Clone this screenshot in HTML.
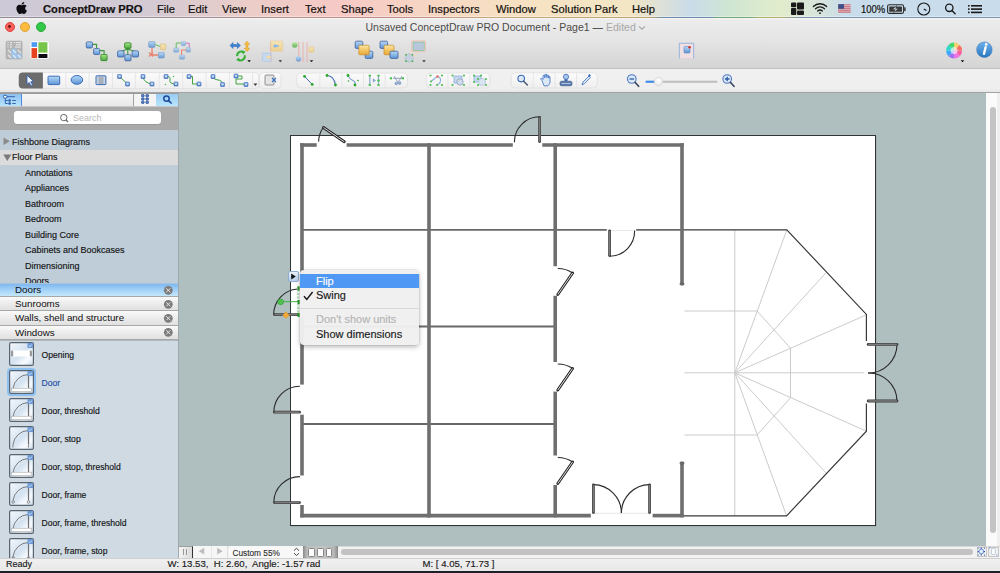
<!DOCTYPE html>
<html><head><meta charset="utf-8">
<style>
*{margin:0;padding:0;box-sizing:border-box}
html,body{width:1000px;height:573px;overflow:hidden;background:#ececec;font-family:"Liberation Sans",sans-serif;color:#222}
.a{position:absolute}
#menubar{left:0;top:0;width:1000px;height:18px;
 background:linear-gradient(90deg,#cdc9d6 0px,#d3cad3 150px,#eccdc8 250px,#f6c9c5 340px,#f7d6c4 430px,#f6e2c2 520px,#f2e6c4 630px,#cadcea 690px,#cfe6d2 730px,#e2eccc 780px,#d9e6d8 810px,#c9dcec 850px,#c9dcec 1000px)}
#menubar .line{left:0;top:16.7px;width:1000px;height:1px;
 background:linear-gradient(90deg,#8e8a96 0px,#a09098 200px,#b89088 300px,#c08c8a 400px,#c8a87c 500px,#c0a46e 650px,#6c8cb0 662px,#6c8cb0 712px,#72a876 716px,#72a876 750px,#b4b070 760px,#b4b070 780px,#7a94b0 800px,#7a94b0 1000px)}
.mt{top:3px;font-size:11.2px;line-height:13px;color:#141210;white-space:nowrap;-webkit-text-stroke:0.2px #141210}
#win{left:0;top:18px;width:1000px;height:555px}
#titlebar{left:0;top:17.7px;width:1000px;height:51.3px;background:linear-gradient(#f6f6f6,#ececec 2px,#e6e6e6 20px,#d4d4d4);border-bottom:1px solid #c0c0c0}
.tl{width:10px;height:10px;border-radius:50%;top:21.5px}
#tb2{left:0;top:69px;width:1000px;height:24.2px;background:linear-gradient(#f0f0f0,#efefef 85%,#e6e6e6);border-bottom:1px solid #a4a4a4}
#panel{left:0;top:93px;width:179px;height:465px;background:#cfdae3;border-right:1px solid #a0a8ae;overflow:hidden}
#canvas{left:179px;top:93px;width:808px;height:453px;background:#afbfbf}
#vscroll{left:987px;top:93px;width:13px;height:453px;background:#f3f3f3;border-left:1px solid #e0e0e0}
#hbar{left:179px;top:546px;width:821px;height:12px;background:#f0f0f0}
#status{left:0;top:557.7px;width:1000px;height:13.5px;background:linear-gradient(#f0f0f0,#e8e8e8);border-top:0.6px solid #d0d0d0}
#bottom{left:0;top:571px;width:1000px;height:2px;background:#1e2028}
.pt{font-size:9px;line-height:11px;color:#141414;white-space:nowrap;-webkit-text-stroke:0.15px #141414}
.tab{left:0;width:178px;height:14.4px;background:linear-gradient(#fafafa,#ececec 50%,#e0e0e0);border-bottom:1.2px solid #a8a8a8;overflow:hidden}
.tab span{position:absolute;left:15px;top:0.8px;font-size:9.8px;line-height:11px;color:#111;white-space:nowrap}
.cm{left:316px;font-size:11px;line-height:13px;color:#1a1a1a;white-space:nowrap;-webkit-text-stroke:0.15px #1a1a1a}
.pg{top:548.4px;width:6.6px;height:8.2px;border-radius:1.6px;background:#fdfdfd;border:1px solid #858585}
.st{font-size:9.6px;line-height:11px;color:#1a1a1a;white-space:nowrap;-webkit-text-stroke:0.15px #1a1a1a}
</style></head><body>
<div id="menubar" class="a">
 <div class="a" style="left:0;top:15.7px;width:1000px;height:1px;background:rgba(255,255,255,0.35)"></div><div class="a line"></div>
</div>
<div class="a mt" style="left:43px;font-weight:bold">ConceptDraw PRO</div>
<div class="a mt" style="left:157px">File</div>
<div class="a mt" style="left:188px">Edit</div>
<div class="a mt" style="left:222px">View</div>
<div class="a mt" style="left:261px">Insert</div>
<div class="a mt" style="left:305px">Text</div>
<div class="a mt" style="left:341px">Shape</div>
<div class="a mt" style="left:387px">Tools</div>
<div class="a mt" style="left:428px">Inspectors</div>
<div class="a mt" style="left:496px">Window</div>
<div class="a mt" style="left:551px">Solution Park</div>
<div class="a mt" style="left:632px">Help</div>
<svg class="a" style="left:0;top:0" width="1000" height="18" viewBox="0 0 1000 18">
<!-- apple -->
<path transform="translate(15.17 1.9) scale(0.54 0.5)" fill="#0e0e12" d="M12.152 6.896c-.948 0-2.415-1.078-3.96-1.04-2.04.027-3.91 1.183-4.961 3.014-2.117 3.675-.546 9.103 1.519 12.09 1.013 1.454 2.208 3.09 3.792 3.039 1.52-.065 2.09-.987 3.935-.987 1.831 0 2.35.987 3.96.948 1.637-.026 2.676-1.48 3.676-2.948 1.156-1.688 1.636-3.325 1.662-3.415-.039-.013-3.182-1.221-3.22-4.857-.026-3.04 2.48-4.494 2.597-4.559-1.429-2.09-3.623-2.324-4.39-2.376-2-.156-3.675 1.09-4.61 1.09zM15.53 3.83c.843-1.012 1.4-2.427 1.245-3.83-1.207.052-2.662.805-3.532 1.818-.78.896-1.454 2.338-1.273 3.714 1.338.104 2.715-.688 3.559-1.701"/>
<!-- grid -->
<g fill="#1a1a1a"><rect x="791" y="2.6" width="5.3" height="4.6" rx="1"/><rect x="791" y="8" width="5.3" height="7" rx="1"/><rect x="797" y="2.6" width="7" height="7" rx="1"/><rect x="797" y="10.4" width="7" height="4.6" rx="1"/></g>
<!-- wifi -->
<g fill="none" stroke="#1a1a1a" stroke-width="1.3" stroke-linecap="round"><path d="M813.3 6.5A9.5 9.5 0 0 1 826.7 6.5"/><path d="M815.5 8.8A6.4 6.4 0 0 1 824.5 8.8"/><path d="M817.7 11A3.2 3.2 0 0 1 822.3 11"/></g>
<circle cx="820" cy="13.2" r="0.9" fill="#1a1a1a"/>
<!-- flag -->
<rect x="838.2" y="4.2" width="12.4" height="8.8" fill="#c87a86"/>
<g stroke="#e8c8cc" stroke-width="0.7"><path d="M838.2 5.5h12.4M838.2 7.6h12.4M838.2 9.7h12.4M838.2 11.8h12.4"/></g>
<rect x="838.2" y="4.2" width="5.8" height="4.6" fill="#3a5088"/>
<!-- battery -->
<rect x="887.6" y="4.8" width="16" height="8.6" rx="1.6" fill="none" stroke="#2a2a2a" stroke-width="1.1"/>
<rect x="904.2" y="7.3" width="1.4" height="3.6" rx="0.5" fill="#2a2a2a"/>
<rect x="889.2" y="6.4" width="12.8" height="5.4" rx="0.6" fill="#3a3a3a"/>
<path d="M896.8 5.5L892.6 9.6h2.6L893.8 12.8 898.2 8.4h-2.6z" fill="#e8eef4" stroke="#2a2a2a" stroke-width="0.5"/>
<!-- clock -->
<circle cx="923.8" cy="9" r="6" fill="none" stroke="#1a1a1a" stroke-width="1.1"/>
<path d="M923.8 9l2.6 1.5" stroke="#1a1a1a" stroke-width="1.4"/>
<!-- search -->
<circle cx="949.3" cy="7.8" r="3.7" fill="none" stroke="#1a1a1a" stroke-width="1.3"/>
<path d="M951.9 10.5l3.2 3.2" stroke="#1a1a1a" stroke-width="1.4" stroke-linecap="round"/>
<!-- list -->
<g fill="#1a1a1a"><rect x="968" y="5" width="1.6" height="1.6"/><rect x="968" y="8.3" width="1.6" height="1.6"/><rect x="968" y="11.6" width="1.6" height="1.6"/><rect x="971" y="5" width="11" height="1.6"/><rect x="971" y="8.3" width="11" height="1.6"/><rect x="971" y="11.6" width="11" height="1.6"/></g>
</svg>
<div class="a mt" style="left:861px;font-size:11px;transform:scaleX(0.86);transform-origin:0 0">100%</div>


<div id="titlebar" class="a"></div>
<div id="tb2" class="a"></div>
<!-- traffic lights -->
<div class="a tl" style="left:4.75px;background:#fc605c;border:0.5px solid #e0443e"></div>
<div class="a" style="left:8.4px;top:25.1px;width:2.8px;height:2.8px;border-radius:50%;background:#6a1a14"></div>
<div class="a tl" style="left:20.2px;background:#fdbc40;border:0.5px solid #dea034"></div>
<div class="a tl" style="left:36px;background:#34c84a;border:0.5px solid #27aa35"></div>
<div class="a" style="left:365.5px;top:21px;font-size:10.5px;line-height:13px;color:#4a4a4a;white-space:nowrap">Unsaved ConceptDraw PRO Document - Page1 <span style="color:#333">&mdash;</span> <span style="color:#a8a8a8">Edited</span></div>
<svg class="a" style="left:638px;top:25px" width="8" height="6"><path d="M1 1.5 L4 4.2 L7 1.5" stroke="#a8a8a8" stroke-width="1.1" fill="none"/></svg>


<svg class="a" style="left:0;top:0" width="1000" height="93" viewBox="0 0 1000 93">
<defs>
 <linearGradient id="gb" x1="0" y1="0" x2="0" y2="1"><stop offset="0" stop-color="#b8daf8"/><stop offset="1" stop-color="#5c94d4"/></linearGradient>
 <linearGradient id="gg" x1="0" y1="0" x2="0" y2="1"><stop offset="0" stop-color="#a8e88a"/><stop offset="1" stop-color="#48a83c"/></linearGradient>
 <linearGradient id="gy" x1="0" y1="0" x2="0" y2="1"><stop offset="0" stop-color="#fce6a0"/><stop offset="1" stop-color="#e8a830"/></linearGradient>
 <linearGradient id="gyl" x1="0" y1="0" x2="0" y2="1"><stop offset="0" stop-color="#f6e4b4"/><stop offset="1" stop-color="#ecd090"/></linearGradient>
 <linearGradient id="gcb" x1="0" y1="0" x2="0" y2="1"><stop offset="0" stop-color="#9cc4f0"/><stop offset="1" stop-color="#4a80cc"/></linearGradient>
 <linearGradient id="gbtn" x1="0" y1="0" x2="0" y2="1"><stop offset="0" stop-color="#fbfbfb"/><stop offset="1" stop-color="#efefef"/></linearGradient>
 <radialGradient id="gsl" cx="0.5" cy="0.4" r="0.6"><stop offset="0" stop-color="#ffffff"/><stop offset="1" stop-color="#e6e6e6"/></radialGradient>
 <linearGradient id="ginfo" x1="0" y1="0" x2="0" y2="1"><stop offset="0" stop-color="#6cb0ec"/><stop offset="1" stop-color="#2a78c0"/></linearGradient>
</defs>
<!-- icon1 table -->
<rect x="6.2" y="41.2" width="15.8" height="17.7" rx="1.2" fill="#b6b6b6" stroke="#a0a0a0" stroke-width="0.6"/>
<g stroke="#f4f4f4" stroke-width="0.9"><path d="M7.5 42.6h1M10 42.6h2M14 42.6h1M16 42.6h5M7.5 44.8h1M10 44.8h2M16 44.8h5M7.5 47h1M10 47h2M15 47h6"/></g>
<rect x="11.5" y="48.8" width="5" height="9.6" fill="#9cc4ec"/><rect x="16.5" y="53.6" width="5" height="4.8" fill="#9cc4ec"/>
<g stroke="#f0f0f0" stroke-width="1.1" opacity="0.85"><path d="M8 50l3 3M13 50l3 3M18 50l3 3M8 55l3 3M13 55l3 3M18 55l3 3"/></g>
<!-- icon2 blocks -->
<rect x="30.4" y="41.2" width="18.5" height="17.5" rx="2" fill="#fff"/>
<rect x="31.5" y="42.2" width="5.6" height="4.7" fill="#4a9af2"/>
<rect x="38.4" y="42.2" width="9" height="10.4" fill="#76c44a"/>
<rect x="31.5" y="48.1" width="5.6" height="10" fill="#e6441e"/>
<rect x="38.4" y="54" width="9" height="4.1" rx="0.6" fill="#0c0c12"/>
<!-- icon3 tree -->
<g stroke="#3a9a3a" stroke-width="1.1" fill="none"><path d="M92.4 44.4h4.2v4.2M99.7 50.6h4.4v4"/></g>
<rect x="86.3" y="41.9" width="6.1" height="6.1" rx="1" fill="url(#gb)" stroke="#3c5e9c" stroke-width="0.8"/>
<rect x="93.6" y="48.6" width="6.1" height="5.9" rx="1" fill="url(#gb)" stroke="#3c5e9c" stroke-width="0.8"/>
<rect x="100.8" y="54.4" width="6.3" height="6.3" rx="1" fill="url(#gg)" stroke="#2e8026" stroke-width="0.8"/>
<!-- icon4 org -->
<g stroke="#3a9a3a" stroke-width="1.1" fill="none"><path d="M127.8 48.3v6.4M127.8 49L121 51.5M127.8 49l7 2.5"/></g>
<rect x="124.6" y="42.8" width="6.4" height="5.6" rx="1" fill="url(#gg)" stroke="#2e8026" stroke-width="0.8"/>
<rect x="117.6" y="50.9" width="6.4" height="6.1" rx="1" fill="url(#gb)" stroke="#3c5e9c" stroke-width="0.8"/>
<rect x="124.8" y="54.7" width="6.2" height="6.1" rx="1" fill="url(#gb)" stroke="#3c5e9c" stroke-width="0.8"/>
<rect x="132.1" y="50.9" width="6.4" height="6.1" rx="1" fill="url(#gb)" stroke="#3c5e9c" stroke-width="0.8"/>
<!-- icon5 -->
<g stroke="#e88070" stroke-width="1.3" fill="none"><path d="M152 47.4v7.6M149 52.5l4 4M153 52.5l-4 4M152 55h6.5"/></g>
<path d="M155 44.5l5.4 2" stroke="#60c060" stroke-width="1"/>
<rect x="148.7" y="41.4" width="6.2" height="6" rx="1" fill="url(#gb)" stroke="#6a8cc0" stroke-width="0.6" opacity="0.9"/>
<rect x="160.4" y="44" width="5.4" height="5.7" rx="1" fill="url(#gyl)" stroke="#d8b870" stroke-width="0.6"/>
<rect x="158.3" y="52.3" width="6" height="5.7" rx="1" fill="url(#gb)" stroke="#6a8cc0" stroke-width="0.6" opacity="0.9"/>
<!-- icon6 -->
<g fill="none" stroke-width="1"><path d="M176.2 48v-5h5" stroke="#60c060"/><path d="M185.6 43.2h3.6v4.2" stroke="#d070c0"/><path d="M186.1 50h-4.6v4.8" stroke="#e88060"/></g>
<g fill="url(#gb)" stroke="#7a9cc8" stroke-width="0.5" opacity="0.75">
<rect x="173.6" y="48.1" width="5.2" height="4.2" rx="0.8"/><rect x="181.4" y="41.4" width="4.2" height="4.4" rx="0.8"/><rect x="186.1" y="47.4" width="4.4" height="4.9" rx="0.8"/><rect x="179.4" y="54.9" width="5.2" height="4.4" rx="0.8"/></g>
<!-- icon7 arrows -->
<path d="M230 45.5l3-3v2h4.4v-2l3 3-3 3v-2h-4.4v2z" fill="#3c84d8" stroke="#2a64b0" stroke-width="0.5"/>
<path d="M247 41.3l2.6 3h-1.6v4.2h1.6l-2.6 3-2.6-3h1.6v-4.2h-1.6z" fill="#f4c040" stroke="#d89020" stroke-width="0.5"/>
<g fill="none" stroke="#34b034" stroke-width="2"><path d="M237.2 56.2A4 4 0 0 1 243.6 52.4"/><path d="M244.6 55.2A4 4 0 0 1 238.2 59.4"/></g><path d="M242 50.2l3.6 1.6-2.6 2.6z" fill="#34b034"/><path d="M239.8 61.6l-3.6-1.6 2.6-2.6z" fill="#34b034"/><rect x="239.2" y="54.2" width="3.4" height="2.6" fill="#c8e8c8" opacity="0.8"/>
<path d="M247.3 60.3h3.6l-1.8 2z" fill="#111"/>
<!-- icon8 -->
<rect x="270.4" y="41" width="12.3" height="10.2" rx="0.8" fill="url(#gyl)" stroke="#e0c890" stroke-width="0.5"/>
<rect x="262.3" y="53" width="9.3" height="8.4" rx="0.8" fill="#c4d8ee" stroke="#a8c0dc" stroke-width="0.5"/>
<path d="M273 46l2.5-2.5v1.6h3v1.8h-3v1.6z" fill="#8cb8e8"/>
<path d="M266 57.2l2.8-2.5v1.6h2.6v1.8h-2.6v1.6z" fill="#f4dca0"/>
<path d="M270.6 41v20.5" stroke="#e8a4a4" stroke-width="0.8" stroke-dasharray="1 0.8"/>
<path d="M278.5 60.3h3.6l-1.8 2z" fill="#333"/>
<!-- icon9 -->
<g stroke="#eab0b0" stroke-width="1"><path d="M298.8 42v20M303 42v20M307 42v20"/></g>
<circle cx="294.8" cy="45" r="2.8" fill="url(#gg)" opacity="0.8"/>
<circle cx="298.5" cy="58.8" r="2.8" fill="url(#gb)" opacity="0.85"/>
<rect x="308.8" y="47" width="5" height="5.3" rx="1" fill="url(#gyl)" stroke="#e0c080" stroke-width="0.5"/>
<path d="M309.7 60.3h3.6l-1.8 2z" fill="#222"/>
<!-- icon10 -->
<rect x="355.2" y="41.2" width="7.6" height="7.2" rx="1.2" fill="url(#gb)" stroke="#3c5e9c" stroke-width="0.8"/>
<rect x="365.2" y="51.2" width="7.6" height="7.2" rx="1.2" fill="url(#gb)" stroke="#3c5e9c" stroke-width="0.8"/>
<rect x="358.8" y="45.2" width="10.4" height="9.6" rx="1.2" fill="url(#gy)" stroke="#c08020" stroke-width="0.6"/>
<!-- icon11 -->
<rect x="380" y="41.2" width="7.6" height="7.2" rx="1.2" fill="url(#gb)" stroke="#3c5e9c" stroke-width="0.8"/>
<rect x="384" y="45.2" width="10" height="9.6" rx="1.2" fill="url(#gy)" stroke="#c08020" stroke-width="0.6"/>
<rect x="390" y="51.2" width="8" height="7.2" rx="1.2" fill="url(#gb)" stroke="#3c5e9c" stroke-width="0.8"/>
<!-- icon12 -->
<path d="M408 56L414 50M411 59L418 52" stroke="#f4d8c8" stroke-width="1.5"/>
<rect x="411.6" y="40.8" width="14" height="10.8" rx="1" fill="#f2dede" stroke="#e8b0b0" stroke-width="0.6"/>
<rect x="413" y="42" width="11.2" height="8.4" fill="#b8c8dc" stroke="#70c070" stroke-width="0.6"/>
<circle cx="409.2" cy="58" r="4.2" fill="#c4d0de" stroke="#a8b8c8" stroke-width="0.5"/>
<g fill="#40b040"><circle cx="406" cy="54.8" r="0.9"/><circle cx="412.4" cy="54.8" r="0.9"/><circle cx="406" cy="61.2" r="0.9"/><circle cx="412.4" cy="61.2" r="0.9"/></g>
<path d="M422.2 60.3h3.6l-1.8 2z" fill="#333"/>
<!-- icon 686 -->
<rect x="679" y="43" width="15" height="15.5" fill="#f0e0e4" stroke="#e8c0c8" stroke-width="0.6" stroke-dasharray="1 1"/>
<path d="M679.4 58.5V43.3h14.2V58.5" stroke="#90b4e0" stroke-width="0.9" fill="none"/>
<rect x="684" y="46.5" width="6" height="6.5" rx="1" fill="url(#gb)" stroke="#4a74b0" stroke-width="0.5"/>
<circle cx="689.6" cy="47.2" r="1.2" fill="#d83020"/>
<!-- color wheel -->
<g transform="translate(954.1 50.6)">
<path d="M0 0L0 -8A8 8 0 0 1 5.66 -5.66z" fill="#f8d070"/>
<path d="M0 0L5.66 -5.66A8 8 0 0 1 8 0z" fill="#f87060"/>
<path d="M0 0L8 0A8 8 0 0 1 5.66 5.66z" fill="#f860a0"/>
<path d="M0 0L5.66 5.66A8 8 0 0 1 0 8z" fill="#f070e8"/>
<path d="M0 0L0 8A8 8 0 0 1 -5.66 5.66z" fill="#a070f0"/>
<path d="M0 0L-5.66 5.66A8 8 0 0 1 -8 0z" fill="#40a8f8"/>
<path d="M0 0L-8 0A8 8 0 0 1 -5.66 -5.66z" fill="#30d8d0"/>
<path d="M0 0L-5.66 -5.66A8 8 0 0 1 0 -8z" fill="#40d870"/>
<circle r="3.5" fill="#fff" opacity="0.6"/>
</g>
<path d="M960.7 60.3h3.6l-1.8 2z" fill="#111"/>
<!-- info -->
<circle cx="984.4" cy="49.7" r="7.8" fill="url(#ginfo)" stroke="#2a6aa8" stroke-width="0.4"/>
<path d="M985.6 47.2l-1.6 6.6" stroke="#fff" stroke-width="2.4" stroke-linecap="round"/>
<circle cx="986.2" cy="44.4" r="1.35" fill="#fff"/>

<!-- ===== second row ===== -->
<g stroke="#d8d8d8" stroke-width="0.6" fill="url(#gbtn)">
<rect x="18.8" y="72.6" width="240" height="16" rx="4"/>
<rect x="259.6" y="72.6" width="21.4" height="16" rx="4"/>
<rect x="296.8" y="73.1" width="110.8" height="14.8" rx="4"/>
<rect x="426.2" y="73.1" width="63.7" height="14.8" rx="4"/>
<rect x="511.2" y="72.8" width="86" height="15.2" rx="4"/>
</g>
<path d="M22.8 72.6H42.9V88.6H22.8A4 4 0 0 1 18.8 84.6V76.6A4 4 0 0 1 22.8 72.6z" fill="#6c6c6c"/>
<g stroke="#e2e2e2" stroke-width="0.8"><path d="M65.9 73v15.4M89.1 73v15.4M112.5 73v15.4M135.4 73v15.4M159.2 73v15.4M182.7 73v15.4M206 73v15.4M229.5 73v15.4M252.5 73v15.4M319.9 73.5v14M341.9 73.5v14M363.5 73.5v14M385.2 73.5v14M447.9 73.5v14M469.9 73.5v14M533.3 73.2v14.5M555 73.2v14.5M576.5 73.2v14.5"/></g>
<!-- cursor -->
<path d="M27 75.3L27 84.3L29.2 82.4L31 86L32.6 85.2L30.8 81.7L33.6 81.4z" fill="#f4f8ff" stroke="#2c5cb0" stroke-width="0.8"/>
<rect x="48" y="76.2" width="11.7" height="8.4" rx="0.8" fill="url(#gb)" stroke="#2e62b4" stroke-width="0.9"/>
<ellipse cx="76.9" cy="79.9" rx="5.8" ry="4.4" fill="url(#gb)" stroke="#2e62b4" stroke-width="0.9"/>
<rect x="96" y="75.8" width="9.9" height="8.8" rx="0.6" fill="#c8d4e0" stroke="#3a6ab8" stroke-width="1"/>
<rect x="98.5" y="76.5" width="5" height="7.4" fill="#a4b0bc"/>
<!-- connectors -->
<g stroke="#2c9a2c" stroke-width="0.9" fill="none">
<path d="M119.5 76.5L127.5 84"/>
<path d="M143 76.5Q144 83 152 84"/>
<path d="M166 76.5Q171 76 170 80Q169 84 176 84"/>
<path d="M189 76.5H192.5V84H199"/>
<path d="M213 76.5Q214 80 218 80Q222 80 222.5 84.5"/>
<path d="M236 76H242V79H236V84H245.5"/>
</g>
<g fill="url(#gcb)" stroke="#3a64b0" stroke-width="0.6">
<rect x="117.5" y="74.5" width="4" height="4" rx="0.6"/><rect x="125.5" y="82" width="4" height="4" rx="0.6"/>
<rect x="141" y="74.5" width="4" height="4" rx="0.6"/><rect x="150" y="82" width="4" height="4" rx="0.6"/>
<rect x="164" y="74.5" width="4" height="4" rx="0.6"/><rect x="174" y="82" width="4" height="4" rx="0.6"/>
<rect x="187" y="74.5" width="4" height="4" rx="0.6"/><rect x="197" y="82" width="4" height="4" rx="0.6"/>
<rect x="211" y="74.5" width="4" height="4" rx="0.6"/><rect x="220.5" y="82.5" width="4" height="4" rx="0.6"/>
<rect x="234" y="74" width="4" height="4" rx="0.6"/><rect x="244" y="82.5" width="4" height="4" rx="0.6"/>
</g><g fill="#eaf2fc" opacity="0.85"><rect x="118.6" y="75.7" width="1.8" height="1.6"/><rect x="126.6" y="83.2" width="1.8" height="1.6"/><rect x="142.1" y="75.7" width="1.8" height="1.6"/><rect x="151.1" y="83.2" width="1.8" height="1.6"/><rect x="165.1" y="75.7" width="1.8" height="1.6"/><rect x="175.1" y="83.2" width="1.8" height="1.6"/><rect x="188.1" y="75.7" width="1.8" height="1.6"/><rect x="198.1" y="83.2" width="1.8" height="1.6"/><rect x="212.1" y="75.7" width="1.8" height="1.6"/><rect x="221.6" y="83.7" width="1.8" height="1.6"/><rect x="235.1" y="75.2" width="1.8" height="1.6"/><rect x="245.1" y="83.7" width="1.8" height="1.6"/></g>
<g fill="#50c050"><circle cx="173.5" cy="76.5" r="0.8"/><circle cx="165.5" cy="84.5" r="0.8"/></g>
<path d="M253.5 83.5h3.8l-1.9 2.4z" fill="#333"/>
<rect x="265" y="75" width="9" height="10" rx="1" fill="#e4e4e4" stroke="#7a7a7a" stroke-width="0.8"/>
<path d="M272 78l4 4M276 78l-4 4" stroke="#3a70c8" stroke-width="1.1"/>
<!-- group2 -->
<path d="M304.5 76.3L312.2 84.4" stroke="#4a70b8" stroke-width="1"/>
<path d="M327 75.5Q334 76 335.5 85" stroke="#4a70b8" stroke-width="1.2" fill="none"/>
<path d="M348 75.5Q350 80 353 80.5Q356 81 355 85" stroke="#6a8cc8" stroke-width="1" fill="none"/>
<g fill="#28a828"><circle cx="304.5" cy="76.3" r="1.4"/><circle cx="312.2" cy="84.4" r="1.4"/><circle cx="327" cy="75.5" r="1.4"/><circle cx="335.5" cy="85" r="1.4"/><circle cx="348" cy="75.5" r="1.4"/><circle cx="355" cy="85" r="1.4"/><circle cx="348.5" cy="81" r="0.8"/><circle cx="358" cy="80.5" r="0.8"/></g>
<path d="M369.8 75.5v9.5M378.5 75.5v9.5" stroke="#8aa8d0" stroke-width="1.2"/>
<path d="M372.8 78.2l3.2 2.2-3.2 2.2z" fill="#8aa8d0"/>
<g fill="#40c040"><rect x="368.6" y="74.8" width="2.4" height="1.6"/><rect x="368.6" y="84.2" width="2.4" height="1.6"/><rect x="377.3" y="74.8" width="2.4" height="1.6"/><rect x="377.3" y="79.6" width="2.4" height="1.8"/><rect x="377.3" y="84.2" width="2.4" height="1.6"/></g>
<path d="M393 78.3h10M394 76l5.5 9M402 76l-5.5 9" stroke="#8a9ab8" stroke-width="0.9"/>
<g fill="#40c040"><rect x="389.8" y="77.3" width="2.2" height="2"/><rect x="401.8" y="77.3" width="2.2" height="2"/></g>
<ellipse cx="396" cy="83.5" rx="1.4" ry="1.8" fill="#8aa8d0"/><ellipse cx="400" cy="83" rx="1.4" ry="1.8" fill="#8aa8d0"/>
<!-- group3 -->
<path d="M431 81.5L437 76.5Q441 77 440.5 81Q440 84 437 85" stroke="#8ab0dc" stroke-width="1.1" fill="none"/>
<rect x="454" y="76" width="8" height="7" fill="#c8d8ec" stroke="#8ab0dc" stroke-width="0.8"/>
<circle cx="460" cy="82" r="3.2" fill="#d0dcec" stroke="#8aa0bc" stroke-width="0.8"/>
<rect x="474" y="76" width="7" height="6" fill="#c8d8ec" stroke="#8ab0dc" stroke-width="0.8"/>
<circle cx="482" cy="82" r="3.6" fill="#d8e4f0" stroke="#a0b8d4" stroke-width="0.6"/>
<g fill="#50c050">
<circle cx="430.5" cy="75.5" r="1.1"/><circle cx="442" cy="75.5" r="1.1"/><circle cx="430.5" cy="85" r="1.1"/><circle cx="442" cy="85" r="1.1"/><circle cx="431" cy="81.5" r="1"/><circle cx="437" cy="85" r="1"/>
<circle cx="452.5" cy="75.5" r="1.1"/><circle cx="464" cy="75.5" r="1.1"/><circle cx="452.5" cy="85" r="1.1"/><circle cx="464" cy="85" r="1.1"/>
<circle cx="474" cy="75.5" r="1.1"/><circle cx="481" cy="75.5" r="1.1"/><circle cx="474" cy="82" r="1.1"/><circle cx="478" cy="79" r="1.1"/><circle cx="486" cy="79" r="1.1"/><circle cx="478" cy="85" r="1.1"/><circle cx="486" cy="85" r="1.1"/>
</g>
<circle cx="437.5" cy="76.5" r="1.3" fill="#e07060"/>
<!-- group4 -->
<circle cx="521.2" cy="78.6" r="3.3" fill="#dce8f8" stroke="#3a6ab8" stroke-width="1.1"/>
<path d="M523.6 81.2l3.8 3.8" stroke="#4a5a70" stroke-width="1.5" stroke-linecap="round"/>
<path d="M542 80.5l-1.5-1.5 1-1 1.5 1.5V75.5l1.4-0.5 0.6 3V74.5l1.4-0.3 0.6 3.5V75l1.4 0.2 0.4 3V76.5l1.2 0.3V83l-2 2.8h-4z" fill="#dce8f8" stroke="#3a70c0" stroke-width="0.8"/>
<circle cx="566" cy="76.8" r="2.6" fill="#a8c8ec" stroke="#3a6ab8" stroke-width="0.8"/>
<path d="M564.5 79.2h3v2h-3z" fill="#3a6ab8"/>
<rect x="560" y="81.2" width="12" height="4.6" rx="1.6" fill="#5a7cb0" stroke="#34507a" stroke-width="0.6"/>
<path d="M561.5 83.5h9" stroke="#c8d4e4" stroke-width="0.8"/>
<path d="M582 85l1-3 6-6 1.5 1.5-6 6z" fill="#dce8f8" stroke="#3a6ab8" stroke-width="0.8"/>
<path d="M588 75.5l1.5-1.5 1.5 1.5-1.5 1.5z" fill="#3a6ab8"/>
<!-- zoom -->
<circle cx="631.8" cy="79" r="4.3" fill="#dce8f8" stroke="#4a78c0" stroke-width="1.1"/>
<path d="M629.5 79h4.6" stroke="#2a5aa8" stroke-width="1.3"/>
<path d="M635 82.3l3.6 4" stroke="#3a4a60" stroke-width="1.7" stroke-linecap="round"/>
<path d="M646.5 81.7H716.5" stroke="#bdbdbd" stroke-width="2" stroke-linecap="round"/>
<path d="M646.5 81.7H656" stroke="#3a8cf0" stroke-width="2" stroke-linecap="round"/>
<circle cx="658.5" cy="81.5" r="4.3" fill="url(#gsl)" stroke="#c8c8c8" stroke-width="0.5"/>
<circle cx="727.2" cy="79" r="4.3" fill="#dce8f8" stroke="#4a78c0" stroke-width="1.1"/>
<path d="M724.9 79h4.6M727.2 76.7v4.6" stroke="#2a5aa8" stroke-width="1.3"/>
<path d="M730.4 82.3l3.6 4" stroke="#3a4a60" stroke-width="1.7" stroke-linecap="round"/>
</svg>

<div id="panel" class="a">
 <div class="a" style="left:0;top:0;width:178px;height:13px;background:linear-gradient(#f6f6f6,#e8e8e8);border-top:0.5px solid #9a9a9a"></div>
 <div class="a" style="left:0;top:0.5px;width:21.5px;height:12.5px;background:linear-gradient(#8cc0f0,#b8e4fc);border-right:1px solid #4a8ad8"></div>
 <div class="a" style="left:133px;top:0.5px;width:23px;height:12.5px;background:#f4f4f4;border-left:1px solid #a0a0a0"></div>
 <div class="a" style="left:156px;top:0.5px;width:22px;height:12.5px;background:linear-gradient(#98ccf4,#b8e4fc)"></div>
 <svg class="a" style="left:0;top:0" width="178" height="13" viewBox="0 93 178 13">
  <ellipse cx="5.2" cy="96.7" rx="1.8" ry="1.5" fill="#fff" stroke="#2a5aa8" stroke-width="1"/>
  <path d="M7 96.7h8M5.3 98.3v5.2h2.5M5.3 100.5h2.5M12.3 100.5h3.5M12.3 103.5h3.5" stroke="#2a5aa8" stroke-width="0.9" fill="none"/><circle cx="9.6" cy="100.5" r="1.3" fill="#2a5aa8"/><circle cx="9.6" cy="103.5" r="1.3" fill="#2a5aa8"/>
  <g fill="#6a8cc8" stroke="#24509c" stroke-width="0.9"><rect x="141.5" y="94.6" width="2.6" height="2.2" rx="0.7"/><rect x="145.9" y="94.6" width="2.6" height="2.2" rx="0.7"/><rect x="141.5" y="97.9" width="2.6" height="2.2" rx="0.7"/><rect x="145.9" y="97.9" width="2.6" height="2.2" rx="0.7"/><rect x="141.5" y="101.2" width="2.6" height="2.2" rx="0.7"/><rect x="145.9" y="101.2" width="2.6" height="2.2" rx="0.7"/></g>
  <circle cx="166.5" cy="98.6" r="2.7" fill="none" stroke="#1e4a9a" stroke-width="1.5"/>
  <path d="M168.5 100.6l2.6 2.4" stroke="#1e4a9a" stroke-width="1.7" stroke-linecap="round"/>
 </svg>
 <div class="a" style="left:0;top:13px;width:178px;height:24.4px;background:#a9a9a9;border-top:1px solid #c8c8c8"></div>
 <div class="a" style="left:14px;top:18px;width:147px;height:13px;background:#fff;border-radius:3px;box-shadow:0 0.5px 0.5px #8a8a8a"></div>
 <svg class="a" style="left:58px;top:20px" width="12" height="10"><circle cx="5.8" cy="4.6" r="3.2" fill="none" stroke="#666" stroke-width="1"/><path d="M8 7l2 2" stroke="#666" stroke-width="1.2"/></svg>
 <div class="a" style="left:73px;top:20px;font-size:9px;line-height:11px;color:#b8b8b8">Search</div>
 <div class="a" style="left:0;top:37.4px;width:178px;height:19.8px;background:#bfcdd9"></div>
 <div class="a" style="left:0;top:57.2px;width:178px;height:14.8px;background:#dcdcdc"></div>
 <div class="a" style="left:0;top:72px;width:178px;height:118px;background:#bfcdd9"></div>
 <svg class="a" style="left:3px;top:44px" width="8" height="9"><path d="M0.5 0.5L6.8 4.3L0.5 8.1z" fill="#8a8a8a"/></svg>
 <svg class="a" style="left:2.5px;top:60.5px" width="9" height="8"><path d="M0.3 0.5H8.3L4.3 7z" fill="#7a7a7a"/></svg>
 <div class="a pt" style="left:12px;top:43.6px">Fishbone Diagrams</div>
 <div class="a pt" style="left:12px;top:59.2px">Floor Plans</div>
 <div class="a pt" style="left:25px;top:74.9px">Annotations</div>
 <div class="a pt" style="left:25px;top:90.4px">Appliances</div>
 <div class="a pt" style="left:25px;top:105.9px">Bathroom</div>
 <div class="a pt" style="left:25px;top:121.4px">Bedroom</div>
 <div class="a pt" style="left:25px;top:136.9px">Building Core</div>
 <div class="a pt" style="left:25px;top:152.4px">Cabinets and Bookcases</div>
 <div class="a pt" style="left:25px;top:167.9px">Dimensioning</div>
 <div class="a pt" style="left:25px;top:183.4px">Doors</div>
 <div class="a tab" style="top:189.5px;height:14.5px;background:linear-gradient(#7eb8f0,#9cccf6 40%,#c4e8fc);border-top:1px solid #a8c4dc"><span>Doors</span></div>
 <div class="a tab" style="top:204px"><span>Sunrooms</span></div>
 <div class="a tab" style="top:218.4px"><span>Walls, shell and structure</span></div>
 <div class="a tab" style="top:232.8px"><span>Windows</span></div>
 <div class="a" style="left:0;top:246.5px;width:178px;height:218.5px;background:#cfdae3;border-top:1px solid #b0b8c0"></div>
<svg class="a" style="left:163px;top:191.7px" width="11" height="11"><circle cx="5.3" cy="5.3" r="4.4" fill="#7c7c7c"/><path d="M3.3 3.3l4 4M7.3 3.3l-4 4" stroke="#e8e8e8" stroke-width="1"/></svg>
<svg class="a" style="left:163px;top:205.7px" width="11" height="11"><circle cx="5.3" cy="5.3" r="4.4" fill="#7c7c7c"/><path d="M3.3 3.3l4 4M7.3 3.3l-4 4" stroke="#e8e8e8" stroke-width="1"/></svg>
<svg class="a" style="left:163px;top:220.0px" width="11" height="11"><circle cx="5.3" cy="5.3" r="4.4" fill="#7c7c7c"/><path d="M3.3 3.3l4 4M7.3 3.3l-4 4" stroke="#e8e8e8" stroke-width="1"/></svg>
<svg class="a" style="left:163px;top:234.3px" width="11" height="11"><circle cx="5.3" cy="5.3" r="4.4" fill="#7c7c7c"/><path d="M3.3 3.3l4 4M7.3 3.3l-4 4" stroke="#e8e8e8" stroke-width="1"/></svg>
<svg width="0" height="0" style="position:absolute"><defs><linearGradient id="gicon" x1="0" y1="0" x2="1" y2="1"><stop offset="0" stop-color="#f4f8fc"/><stop offset="0.5" stop-color="#d4e2f0"/><stop offset="0.75" stop-color="#f8fbff"/><stop offset="1" stop-color="#c8d8e8"/></linearGradient></defs></svg><svg class="a" style="left:9px;top:249px" width="25" height="24"><defs></defs><rect x="0.6" y="0.6" width="23.8" height="22.8" rx="1.5" fill="url(#gicon)" stroke="#5a6470" stroke-width="1.2"/><rect x="3.5" y="8.5" width="18" height="6" fill="#fff"/><rect x="2" y="8.5" width="2.2" height="6" rx="1" fill="#9a9a9a"/><rect x="20.8" y="8.5" width="2.2" height="6" rx="1" fill="#9a9a9a"/><rect x="18.5" y="1" width="5.5" height="5" fill="#6a9ad8"/><path d="M19.8 3.6l1.2 1.1 1.8-2.2" stroke="#fff" stroke-width="0.7" fill="none"/></svg><div class="a pt" style="left:41.5px;font-size:8.6px;top:256.9px;color:#141414;-webkit-text-stroke-color:#141414">Opening</div>
<div class="a" style="left:7px;top:275px;width:29px;height:28px;border-radius:4px;background:#8ec0f0"></div><svg class="a" style="left:9px;top:277px" width="25" height="24"><defs></defs><rect x="0.6" y="0.6" width="23.8" height="22.8" rx="1.5" fill="url(#gicon)" stroke="#5a6470" stroke-width="1.2"/><path d="M4 18.5A16 16 0 0 1 19.5 4.5" fill="none" stroke="#707070" stroke-width="0.9"/><path d="M19.5 4.5V18.5" stroke="#707070" stroke-width="1.2"/><rect x="2.5" y="18.2" width="20" height="3.4" fill="#fff" stroke="#9a9a9a" stroke-width="0.5"/><rect x="18.5" y="1" width="5.5" height="5" fill="#6a9ad8"/><path d="M19.8 3.6l1.2 1.1 1.8-2.2" stroke="#fff" stroke-width="0.7" fill="none"/></svg><div class="a pt" style="left:41.5px;font-size:8.6px;top:284.9px;color:#1f4fa8;-webkit-text-stroke-color:#1f4fa8">Door</div>
<svg class="a" style="left:9px;top:305px" width="25" height="24"><defs></defs><rect x="0.6" y="0.6" width="23.8" height="22.8" rx="1.5" fill="url(#gicon)" stroke="#5a6470" stroke-width="1.2"/><path d="M4 18.5A16 16 0 0 1 19.5 4.5" fill="none" stroke="#707070" stroke-width="0.9"/><path d="M19.5 4.5V18.5" stroke="#707070" stroke-width="1.2"/><rect x="2.5" y="18.2" width="20" height="3.4" fill="#fff" stroke="#9a9a9a" stroke-width="0.5"/><rect x="18.5" y="1" width="5.5" height="5" fill="#6a9ad8"/><path d="M19.8 3.6l1.2 1.1 1.8-2.2" stroke="#fff" stroke-width="0.7" fill="none"/></svg><div class="a pt" style="left:41.5px;font-size:8.6px;top:312.9px;color:#141414;-webkit-text-stroke-color:#141414">Door, threshold</div>
<svg class="a" style="left:9px;top:333px" width="25" height="24"><defs></defs><rect x="0.6" y="0.6" width="23.8" height="22.8" rx="1.5" fill="url(#gicon)" stroke="#5a6470" stroke-width="1.2"/><path d="M4 18.5A16 16 0 0 1 19.5 4.5" fill="none" stroke="#707070" stroke-width="0.9"/><path d="M19.5 4.5V18.5" stroke="#707070" stroke-width="1.2"/><path d="M4 18.5v3M19.5 18.5v3" stroke="#707070" stroke-width="0.8"/><rect x="18.5" y="1" width="5.5" height="5" fill="#6a9ad8"/><path d="M19.8 3.6l1.2 1.1 1.8-2.2" stroke="#fff" stroke-width="0.7" fill="none"/></svg><div class="a pt" style="left:41.5px;font-size:8.6px;top:340.9px;color:#141414;-webkit-text-stroke-color:#141414">Door, stop</div>
<svg class="a" style="left:9px;top:361px" width="25" height="24"><defs></defs><rect x="0.6" y="0.6" width="23.8" height="22.8" rx="1.5" fill="url(#gicon)" stroke="#5a6470" stroke-width="1.2"/><path d="M4 18.5A16 16 0 0 1 19.5 4.5" fill="none" stroke="#707070" stroke-width="0.9"/><path d="M19.5 4.5V18.5" stroke="#707070" stroke-width="1.2"/><rect x="2.5" y="18.2" width="20" height="3.4" fill="#fff" stroke="#9a9a9a" stroke-width="0.5"/><rect x="18.5" y="1" width="5.5" height="5" fill="#6a9ad8"/><path d="M19.8 3.6l1.2 1.1 1.8-2.2" stroke="#fff" stroke-width="0.7" fill="none"/></svg><div class="a pt" style="left:41.5px;font-size:8.6px;top:368.9px;color:#141414;-webkit-text-stroke-color:#141414">Door, stop, threshold</div>
<svg class="a" style="left:9px;top:389px" width="25" height="24"><defs></defs><rect x="0.6" y="0.6" width="23.8" height="22.8" rx="1.5" fill="url(#gicon)" stroke="#5a6470" stroke-width="1.2"/><path d="M4 18.5A16 16 0 0 1 19.5 4.5" fill="none" stroke="#707070" stroke-width="0.9"/><path d="M19.5 4.5V18.5" stroke="#707070" stroke-width="1.2"/><circle cx="4.2" cy="20" r="1.3" fill="none" stroke="#707070" stroke-width="0.7"/><circle cx="19.5" cy="20" r="1.3" fill="none" stroke="#707070" stroke-width="0.7"/><rect x="18.5" y="1" width="5.5" height="5" fill="#6a9ad8"/><path d="M19.8 3.6l1.2 1.1 1.8-2.2" stroke="#fff" stroke-width="0.7" fill="none"/></svg><div class="a pt" style="left:41.5px;font-size:8.6px;top:396.9px;color:#141414;-webkit-text-stroke-color:#141414">Door, frame</div>
<svg class="a" style="left:9px;top:417px" width="25" height="24"><defs></defs><rect x="0.6" y="0.6" width="23.8" height="22.8" rx="1.5" fill="url(#gicon)" stroke="#5a6470" stroke-width="1.2"/><path d="M4 18.5A16 16 0 0 1 19.5 4.5" fill="none" stroke="#707070" stroke-width="0.9"/><path d="M19.5 4.5V18.5" stroke="#707070" stroke-width="1.2"/><rect x="2.5" y="18.2" width="20" height="3.4" fill="#fff" stroke="#9a9a9a" stroke-width="0.5"/><rect x="18.5" y="1" width="5.5" height="5" fill="#6a9ad8"/><path d="M19.8 3.6l1.2 1.1 1.8-2.2" stroke="#fff" stroke-width="0.7" fill="none"/></svg><div class="a pt" style="left:41.5px;font-size:8.6px;top:424.9px;color:#141414;-webkit-text-stroke-color:#141414">Door, frame, threshold</div>
<svg class="a" style="left:9px;top:445px" width="25" height="24"><defs></defs><rect x="0.6" y="0.6" width="23.8" height="22.8" rx="1.5" fill="url(#gicon)" stroke="#5a6470" stroke-width="1.2"/><path d="M4 18.5A16 16 0 0 1 19.5 4.5" fill="none" stroke="#707070" stroke-width="0.9"/><path d="M19.5 4.5V18.5" stroke="#707070" stroke-width="1.2"/><path d="M4 18.5v3M19.5 18.5v3" stroke="#707070" stroke-width="0.8"/><circle cx="4.2" cy="20" r="1.3" fill="none" stroke="#707070" stroke-width="0.7"/><circle cx="19.5" cy="20" r="1.3" fill="none" stroke="#707070" stroke-width="0.7"/><rect x="18.5" y="1" width="5.5" height="5" fill="#6a9ad8"/><path d="M19.8 3.6l1.2 1.1 1.8-2.2" stroke="#fff" stroke-width="0.7" fill="none"/></svg><div class="a pt" style="left:41.5px;font-size:8.6px;top:452.9px;color:#141414;-webkit-text-stroke-color:#141414">Door, frame, stop</div>
</div>
<div id="canvas" class="a"></div>
<svg class="a" style="left:179px;top:93px" width="808" height="453" viewBox="179 93 808 453"><rect x="291" y="136" width="585.5" height="390.5" fill="#6a7070" opacity="0.35"/>
<rect x="290.5" y="135.5" width="585" height="390" fill="#fff" stroke="#333" stroke-width="1"/>
<path d="M734.8 372.8L786.8 229.8" stroke="#cbcbcb" stroke-width="1.00" stroke-linecap="butt"/>
<path d="M734.8 372.8L825.8 273.0" stroke="#cbcbcb" stroke-width="1.00" stroke-linecap="butt"/>
<path d="M734.8 372.8L866.0 315.0" stroke="#cbcbcb" stroke-width="1.00" stroke-linecap="butt"/>
<path d="M734.8 372.8L866.0 431.0" stroke="#cbcbcb" stroke-width="1.00" stroke-linecap="butt"/>
<path d="M734.8 372.8L825.8 472.8" stroke="#cbcbcb" stroke-width="1.00" stroke-linecap="butt"/>
<path d="M734.8 372.8L786.6 515.8" stroke="#cbcbcb" stroke-width="1.00" stroke-linecap="butt"/>
<path d="M734.8 229.8L734.8 515.8" stroke="#cbcbcb" stroke-width="1.00" stroke-linecap="butt"/>
<path d="M684.5 311.0L757.0 311.0" stroke="#cbcbcb" stroke-width="1.00" stroke-linecap="butt"/>
<path d="M684.5 372.8L864.4 372.8" stroke="#cbcbcb" stroke-width="1.00" stroke-linecap="butt"/>
<path d="M684.5 435.0L757.0 435.0" stroke="#cbcbcb" stroke-width="1.00" stroke-linecap="butt"/>
<path d="M757 311L790.5 348.2V397.8L757 435" stroke="#cbcbcb" stroke-width="1" fill="none"/>
<g stroke="#e4e4e4" stroke-width="0.9" fill="none"><path d="M594 513.3H649M610.5 230.6H634"/></g><path d="M682 229.8H786.8L866.4 314.4V341" stroke="#3a3a3a" stroke-width="1.2" fill="none"/>
<path d="M866.4 403.4V431.2L786.6 515.8H682" stroke="#3a3a3a" stroke-width="1.2" fill="none"/>
<path d="M302.0 229.8L606.8 229.8" stroke="#686868" stroke-width="1.80" stroke-linecap="butt"/>
<path d="M636.2 229.8L682.0 229.8" stroke="#686868" stroke-width="1.80" stroke-linecap="butt"/>
<path d="M302.0 326.5L555.0 326.5" stroke="#686868" stroke-width="1.80" stroke-linecap="butt"/>
<path d="M302.0 424.0L555.0 424.0" stroke="#686868" stroke-width="1.80" stroke-linecap="butt"/>
<path d="M300.2 145.0L316.7 145.0" stroke="#6f6f6f" stroke-width="3.60" stroke-linecap="butt"/>
<path d="M346.6 145.0L512.8 145.0" stroke="#6f6f6f" stroke-width="3.60" stroke-linecap="butt"/>
<path d="M542.3 145.0L683.8 145.0" stroke="#6f6f6f" stroke-width="3.60" stroke-linecap="butt"/>
<path d="M300.2 515.6L590.8 515.6" stroke="#6f6f6f" stroke-width="3.60" stroke-linecap="butt"/>
<path d="M652.6 515.6L683.8 515.6" stroke="#6f6f6f" stroke-width="3.60" stroke-linecap="butt"/>
<path d="M302.0 143.2L302.0 287.0" stroke="#6f6f6f" stroke-width="3.60" stroke-linecap="butt"/>
<path d="M302.0 317.0L302.0 384.6" stroke="#6f6f6f" stroke-width="3.60" stroke-linecap="butt"/>
<path d="M302.0 414.7L302.0 475.5" stroke="#6f6f6f" stroke-width="3.60" stroke-linecap="butt"/>
<path d="M302.0 505.0L302.0 517.4" stroke="#6f6f6f" stroke-width="3.60" stroke-linecap="butt"/>
<path d="M429.0 143.2L429.0 517.4" stroke="#6f6f6f" stroke-width="3.60" stroke-linecap="butt"/>
<path d="M555.2 143.2L555.2 266.2" stroke="#6f6f6f" stroke-width="3.60" stroke-linecap="butt"/>
<path d="M555.2 295.8L555.2 362.0" stroke="#6f6f6f" stroke-width="3.60" stroke-linecap="butt"/>
<path d="M555.2 391.6L555.2 455.5" stroke="#6f6f6f" stroke-width="3.60" stroke-linecap="butt"/>
<path d="M555.2 485.0L555.2 517.4" stroke="#6f6f6f" stroke-width="3.60" stroke-linecap="butt"/>
<path d="M682.0 143.2L682.0 283.5" stroke="#6f6f6f" stroke-width="3.60" stroke-linecap="butt"/>
<ellipse cx="682" cy="284" rx="2.2" ry="1.3" fill="#6f6f6f" stroke="#444" stroke-width="0.5"/>
<path d="M682.0 463.5L682.0 517.4" stroke="#6f6f6f" stroke-width="3.60" stroke-linecap="butt"/>
<ellipse cx="682" cy="463" rx="2.2" ry="1.3" fill="#6f6f6f" stroke="#444" stroke-width="0.5"/>
<path d="M318.6 141.5A26.0 26.0 0 0 1 323.2 127.5" stroke="#2a2a2a" stroke-width="1.1" fill="none"/>
<path d="M323.5 127.5L344.3 141.8" stroke="#262626" stroke-width="2.90" stroke-linecap="round"/><path d="M323.5 127.5L344.3 141.8" stroke="#ffffff" stroke-width="0.85" stroke-linecap="butt"/>
<path d="M514.4 142.2A25.2 25.2 0 0 1 539.5 116.8" stroke="#2a2a2a" stroke-width="1.1" fill="none"/>
<path d="M539.6 117.5L539.6 141.5" stroke="#3a3a3a" stroke-width="2.80" stroke-linecap="round"/><path d="M539.6 117.5L539.6 141.5" stroke="#7a7a7a" stroke-width="1.60" stroke-linecap="butt"/>
<path d="M609.8 256.2A25.0 25.0 0 0 0 634.6 230.5" stroke="#2a2a2a" stroke-width="1.1" fill="none"/>
<path d="M609.6 231.0L609.6 255.5" stroke="#3a3a3a" stroke-width="2.80" stroke-linecap="round"/><path d="M609.6 231.0L609.6 255.5" stroke="#7a7a7a" stroke-width="1.60" stroke-linecap="butt"/>
<path d="M557.8 268.5A26.0 26.0 0 0 1 572.6 273.0" stroke="#2a2a2a" stroke-width="1.1" fill="none"/>
<path d="M572.6 273.0L557.8 294.5" stroke="#262626" stroke-width="2.90" stroke-linecap="round"/><path d="M572.6 273.0L557.8 294.5" stroke="#ffffff" stroke-width="0.85" stroke-linecap="butt"/>
<path d="M557.8 364.0A26.0 26.0 0 0 1 572.6 368.5" stroke="#2a2a2a" stroke-width="1.1" fill="none"/>
<path d="M572.6 368.5L557.8 390.0" stroke="#262626" stroke-width="2.90" stroke-linecap="round"/><path d="M572.6 368.5L557.8 390.0" stroke="#ffffff" stroke-width="0.85" stroke-linecap="butt"/>
<path d="M557.8 457.5A26.0 26.0 0 0 1 572.6 462.0" stroke="#2a2a2a" stroke-width="1.1" fill="none"/>
<path d="M572.6 462.0L557.8 483.5" stroke="#262626" stroke-width="2.90" stroke-linecap="round"/><path d="M572.6 462.0L557.8 483.5" stroke="#ffffff" stroke-width="0.85" stroke-linecap="butt"/>
<path d="M299.9 386.2A26.0 26.0 0 0 0 273.8 412.2" stroke="#2a2a2a" stroke-width="1.1" fill="none"/>
<path d="M274.5 412.2L299.5 412.2" stroke="#3a3a3a" stroke-width="2.80" stroke-linecap="round"/><path d="M274.5 412.2L299.5 412.2" stroke="#7a7a7a" stroke-width="1.60" stroke-linecap="butt"/>
<path d="M299.9 476.6A26.0 26.0 0 0 0 273.8 502.6" stroke="#2a2a2a" stroke-width="1.1" fill="none"/>
<path d="M274.5 502.6L299.5 502.6" stroke="#3a3a3a" stroke-width="2.80" stroke-linecap="round"/><path d="M274.5 502.6L299.5 502.6" stroke="#7a7a7a" stroke-width="1.60" stroke-linecap="butt"/>
<path d="M297.5 289.0A25.5 25.5 0 0 0 273.7 314.6" stroke="#2a2a2a" stroke-width="1.1" fill="none"/>
<path d="M274.5 314.6L297.5 314.6" stroke="#3a3a3a" stroke-width="2.80" stroke-linecap="round"/><path d="M274.5 314.6L297.5 314.6" stroke="#7a7a7a" stroke-width="1.60" stroke-linecap="butt"/>
<path d="M593.4 484.6A28.4 28.4 0 0 1 621.4 513.0" stroke="#2a2a2a" stroke-width="1.1" fill="none"/>
<path d="M649.6 484.6A28.4 28.4 0 0 0 621.4 513.0" stroke="#2a2a2a" stroke-width="1.1" fill="none"/>
<path d="M593.4 485.0L593.4 512.6" stroke="#3a3a3a" stroke-width="2.80" stroke-linecap="round"/><path d="M593.4 485.0L593.4 512.6" stroke="#7a7a7a" stroke-width="1.60" stroke-linecap="butt"/>
<path d="M649.6 485.0L649.6 512.6" stroke="#3a3a3a" stroke-width="2.80" stroke-linecap="round"/><path d="M649.6 485.0L649.6 512.6" stroke="#7a7a7a" stroke-width="1.60" stroke-linecap="butt"/>
<path d="M897.0 344.6A28.6 28.6 0 0 1 868.0 373.0" stroke="#2a2a2a" stroke-width="1.1" fill="none"/>
<path d="M868.0 373.0A28.4 28.4 0 0 1 897.0 401.0" stroke="#2a2a2a" stroke-width="1.1" fill="none"/>
<path d="M868.2 344.4L897.0 344.4" stroke="#3a3a3a" stroke-width="2.80" stroke-linecap="round"/><path d="M868.2 344.4L897.0 344.4" stroke="#7a7a7a" stroke-width="1.60" stroke-linecap="butt"/>
<path d="M868.2 401.0L897.0 401.0" stroke="#3a3a3a" stroke-width="2.80" stroke-linecap="round"/><path d="M868.2 401.0L897.0 401.0" stroke="#7a7a7a" stroke-width="1.60" stroke-linecap="butt"/>
<path d="M298 286V317" stroke="#40b040" stroke-width="0.8" stroke-dasharray="2 1.5"/>
<path d="M283.5 301.7L298.0 301.7" stroke="#40b040" stroke-width="1.00" stroke-linecap="butt"/>
<circle cx="280.6" cy="301.8" r="2.9" fill="#50c050" stroke="#2a9a2a" stroke-width="0.6"/>
<path d="M286 311.8L289.3 315.2L286 318.6L282.7 315.2z" fill="#f2aa34" stroke="#d88a20" stroke-width="0.4"/>
<rect x="297.6" y="286.5" width="2" height="4" fill="#2a9a2a"/>
<rect x="297.6" y="300.0" width="2" height="4" fill="#2a9a2a"/>
<rect x="297.6" y="313.0" width="2" height="4" fill="#2a9a2a"/></svg>

<div class="a" style="left:287.5px;top:270.5px;width:11px;height:11px;border-radius:2px;background:linear-gradient(#eaf2fc,#b8d0ec);border:0.6px solid #90acd0"></div>
<svg class="a" style="left:290px;top:273px" width="7" height="7"><path d="M1.2 0.6L5.8 3.5L1.2 6.4z" fill="#111"/></svg>
<div class="a" style="left:299.6px;top:270.2px;width:119.4px;height:75px;border-radius:4px;background:rgba(240,240,240,0.97);box-shadow:0 2px 5px rgba(0,0,0,0.28),0 0 0 0.5px rgba(0,0,0,0.12)"></div>
<div class="a" style="left:299.6px;top:273.9px;width:119.4px;height:14.1px;background:#4f98f4"></div>
<div class="a cm" style="top:274.6px;color:#fff;-webkit-text-stroke-color:#fff">Flip</div>
<div class="a cm" style="top:289.3px">Swing</div>
<svg class="a" style="left:303px;top:291px" width="11" height="10"><path d="M1 5.2L3.8 8.4L9.6 1" stroke="#1a1a1a" stroke-width="1.5" fill="none"/></svg>
<div class="a" style="left:299.6px;top:307.6px;width:119.4px;height:1px;background:#d8d8d8"></div>
<div class="a cm" style="top:313.2px;color:#b4b4b4;-webkit-text-stroke-color:#b4b4b4">Don't show units</div>
<div class="a cm" style="top:328px">Show dimensions</div>

<div class="a" style="left:986.3px;top:93px;width:13.7px;height:453px;background:linear-gradient(90deg,#fafafa,#fbfbfb 75%,#ededed 80%,#f0f0f0)"></div>
<div class="a" style="left:990px;top:107.3px;width:5.8px;height:425.5px;border-radius:2.9px;background:#c4c4c4"></div>
<div class="a" style="left:179px;top:546px;width:821px;height:11.7px;background:#f2f2f2;border-top:0.5px solid #d8d8d8"></div>
<div class="a" style="left:179px;top:546px;width:13.5px;height:11.7px;background:linear-gradient(90deg,#f4f4f4,#dcdcdc);border-right:1.2px solid #333;border-top:0.8px solid #a0a0a0"></div>
<div class="a" style="left:183.3px;top:549px;width:1.1px;height:5.6px;background:#999"></div>
<div class="a" style="left:186.1px;top:549px;width:1.1px;height:5.6px;background:#999"></div>
<div class="a" style="left:193px;top:546.3px;width:35px;height:11.4px;background:#f6f6f6;border-right:1px solid #e0e0e0"></div>
<div class="a" style="left:210.5px;top:546.3px;width:0.8px;height:11.4px;background:#e6e6e6"></div>
<svg class="a" style="left:193px;top:546px" width="36" height="12"><path d="M5.8 5.2L11.2 1.8V8.6z" fill="#bcbcbc"/><path d="M29.6 5.2L24.2 1.8V8.6z" fill="#bcbcbc"/></svg>
<div class="a" style="left:228.5px;top:546.3px;width:74px;height:11.4px;background:#f8f8f8"></div>
<div class="a" style="left:232.4px;top:548.6px;font-size:8.3px;line-height:9px;color:#2a2a2a;white-space:nowrap;-webkit-text-stroke:0.1px #2a2a2a">Custom 55%</div>
<svg class="a" style="left:292px;top:547px" width="9" height="10"><path d="M2 3.6L4.5 1.3L7 3.6M2 6.2L4.5 8.5L7 6.2" stroke="#333" stroke-width="0.9" fill="none"/></svg>
<div class="a" style="left:302.6px;top:546.3px;width:35px;height:11.4px;background:linear-gradient(90deg,#8a8a8a,#bcbcbc 12%,#c4c4c4 50%,#b8b8b8 88%,#8a8a8a)"></div>
<div class="a pg" style="left:308.1px"></div><div class="a pg" style="left:317px"></div><div class="a pg" style="left:325.8px"></div>
<div class="a" style="left:341px;top:548.8px;width:631.5px;height:6.2px;border-radius:3.1px;background:#c2c2c2"></div>
<div class="a" style="left:976.5px;top:546.5px;width:10px;height:10.5px;background:#f0f0f0;border:0.5px solid #c8c8c8"></div>
<div class="a" style="left:987.5px;top:546.5px;width:11px;height:10.5px;background:#f0f0f0;border:0.5px solid #c8c8c8"></div>
<svg class="a" style="left:976px;top:546px" width="24" height="12"><circle cx="5.3" cy="5.5" r="2.4" fill="#e4ecf8" stroke="#4a7ac8" stroke-width="0.8"/><g fill="#2a5ab8"><rect x="1.6" y="5" width="1.4" height="1.2"/><rect x="7.6" y="5" width="1.4" height="1.2"/><rect x="4.7" y="1.6" width="1.2" height="1.3"/><rect x="4.7" y="8.2" width="1.2" height="1.3"/><rect x="1.6" y="1.6" width="1" height="1"/><rect x="8" y="1.6" width="1" height="1"/><rect x="1.6" y="8.6" width="1" height="1"/><rect x="8" y="8.6" width="1" height="1"/></g><rect x="15.6" y="2.5" width="3.6" height="6" rx="0.8" fill="#fff" stroke="#a8b8d0" stroke-width="0.7"/><g fill="#4a7ac8"><rect x="13.2" y="1.4" width="1" height="1"/><rect x="20.4" y="8.6" width="1" height="1"/></g></svg>

<div id="status" class="a"></div>
<div id="bottom" class="a"></div>
<div class="a st" style="left:6px;top:558.6px;font-size:9px">Ready</div>
<div class="a st" style="left:167.5px;top:558.4px">W: 13.53,&nbsp; H: 2.60,&nbsp; Angle: -1.57 rad</div>
<div class="a st" style="left:422.5px;top:558.4px">M: [ 4.05, 71.73 ]</div>

</body></html>
